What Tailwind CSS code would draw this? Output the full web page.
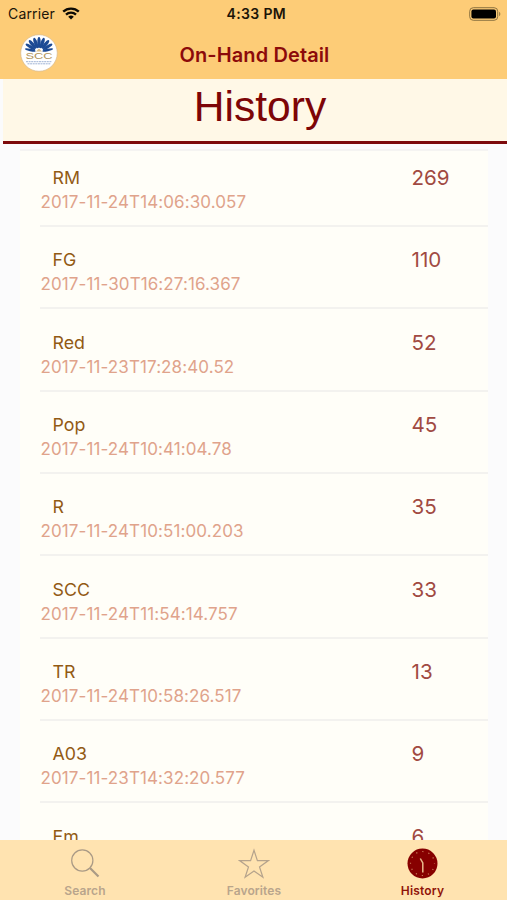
<!DOCTYPE html>
<html lang="en">

<head>
  <meta charset="UTF-8" />
  <meta name="viewport" content="width=device-width, initial-scale=1.0" />
  <script src="https://cdn.jsdelivr.net/npm/@tailwindcss/browser@4"></script>
  <title>On-Hand Detail</title>
</head>

<body class="bg-[#fbfbfc] font-['Inter',sans-serif]">
  <div class="flex h-[900px] w-[507px] flex-col overflow-hidden">
    <header class="h-[79px] shrink-0 bg-[#fdcc77]">
      <div class="grid h-[27px] grid-cols-[1fr_60px_1fr] items-center pr-1.5 pl-2 text-[14px] text-[#1c1508]">
        <div class="flex items-center gap-[7px]">
          <span class="tracking-[0.15px]">Carrier</span>
          <svg class="h-[13px] w-[18px]" viewBox="0 0 18 13" fill="none" stroke="#0d0a04" stroke-width="2.3">
            <path d="M1.2 4.7a11.2 11.2 0 0 1 15.6 0" />
            <path d="M4 7.7a7.2 7.2 0 0 1 10 0" />
            <path d="M9 12.5 6.2 9.8a4 4 0 0 1 5.6 0z" fill="#0d0a04" stroke="none" />
          </svg>
        </div>
        <span class="pl-0.5 text-center font-semibold tracking-[0.35px] whitespace-nowrap">4:33 PM</span>
        <svg class="h-[14px] w-[32px] justify-self-end" viewBox="0 0 32 14" fill="none">
          <rect x=".7" y=".7" width="28" height="12.6" rx="3.6" stroke="#8d7341" />
          <rect x="2.4" y="2.4" width="24.6" height="9.2" rx="2" fill="#000" />
          <path d="M30.2 4.8c1.5.7 1.5 3.7 0 4.4z" fill="#8d7341" />
        </svg>
      </div>
      <div class="grid h-[52px] grid-cols-[80px_1fr_80px] items-center">
        <svg class="mb-px ml-5 size-[38px]" viewBox="0 0 38 38">
          <circle cx="19" cy="19" r="18.3" fill="#fff" stroke="#d8b989" stroke-width=".7" />
          <g fill="#1c4a94">
            <ellipse cx="19" cy="8.5" rx="1.7" ry="5.5" />
            <ellipse cx="19" cy="8.5" rx="1.7" ry="5.5" transform="rotate(20 19 18)" />
            <ellipse cx="19" cy="8.5" rx="1.7" ry="5.5" transform="rotate(-20 19 18)" />
            <ellipse cx="19" cy="8" rx="1.7" ry="5.5" transform="rotate(40 19 18)" />
            <ellipse cx="19" cy="8" rx="1.7" ry="5.5" transform="rotate(-40 19 18)" />
            <ellipse cx="19" cy="8" rx="1.5" ry="5.5" transform="rotate(59 19 18)" />
            <ellipse cx="19" cy="8" rx="1.5" ry="5.5" transform="rotate(-59 19 18)" />
            <ellipse cx="19" cy="9" rx="1.2" ry="5.5" transform="rotate(77 19 18)" />
            <ellipse cx="19" cy="9" rx="1.2" ry="5.5" transform="rotate(-77 19 18)" />
          </g>
          <path d="m16 17.5 3-3 3 3z" fill="#d9bd85" />
          <text x="5.5" y="25.2" textLength="27" lengthAdjust="spacingAndGlyphs" font-family="Liberation Sans, sans-serif" font-size="9.5" fill="#b0935a">SCC</text>
          <path d="M6 27.7h26M7.5 29.8h23" stroke="#9fb3d4" stroke-width="1" stroke-dasharray="2 .6" />
        </svg>
        <h1 class="pt-[3px] pl-0.5 text-center text-[20px] font-semibold tracking-[0.1px] text-[#8c0a0a]">On-Hand Detail</h1>
      </div>
    </header>

    <div class="ml-[3px] flex h-[65px] shrink-0 justify-center border-b-[3px] border-[#7d0a0c] bg-[#fff8e7] pl-[10px]">
      <h2 class="font-['Liberation_Sans',sans-serif] text-[42.6px] leading-[54px] text-[#7d0507]">History</h2>
    </div>

    <main class="min-h-0 flex-1 overflow-hidden pt-[5px] pr-[19px] pl-5">
      <div id="list" class="border-t-2 border-[#f5f4f2] bg-[#fffef8] pl-5"></div>
    </main>

    <nav class="grid h-[60px] shrink-0 grid-cols-3 bg-[#ffe3b0] text-[12px] font-semibold text-[#b9a58c]">
      <div class="flex flex-col items-center pt-2">
        <svg class="h-8 w-8" viewBox="0 0 32 32" fill="none" stroke="#aa9a85">
          <circle cx="13.3" cy="12.5" r="10.6" stroke-width="1.2" />
          <path d="m21 20 8.500 8.500" stroke-width="2.2" />
        </svg>
        <span class="mt-[3px] pl-px leading-4 tracking-[0.1px]">Search</span>
      </div>
      <div class="flex flex-col items-center pt-2">
        <svg class="h-8 w-8" viewBox="0 0 32 32" fill="none" stroke="#b5a38c" stroke-width="1.2">
          <path d="m16 2.2 3.4 10.4h11L21.5 19l3.4 10.3-8.9-6.3-8.9 6.3L10.5 19l-8.900-6.400h11z" />
        </svg>
        <span class="mt-[3px] pl-px leading-4 tracking-[0.1px]">Favorites</span>
      </div>
      <div class="flex flex-col items-center pt-2 text-[#8f1308]">
        <svg class="h-8 w-8" viewBox="0 0 32 32" fill="none">
          <circle cx="15.5" cy="15.5" r="15" fill="#870000" />
          <circle cx="15.5" cy="15.5" r="12" stroke="#c97a58" stroke-width="1.2" stroke-dasharray="1.2 5.083" stroke-dashoffset=".6" />
          <path d="m13.3 10.5 2.500 4.500v9.500" stroke="#e8b98c" stroke-width="1.5" />
        </svg>
        <span class="mt-[3px] leading-4 tracking-[0.2px]">History</span>
      </div>
    </nav>
  </div>

  <script>
    const items = [
      ['RM', '2017-11-24T14:06:30.057', 269],
      ['FG', '2017-11-30T16:27:16.367', 110],
      ['Red', '2017-11-23T17:28:40.52', 52],
      ['Pop', '2017-11-24T10:41:04.78', 45],
      ['R', '2017-11-24T10:51:00.203', 35],
      ['SCC', '2017-11-24T11:54:14.757', 33],
      ['TR', '2017-11-24T10:58:26.517', 13],
      ['A03', '2017-11-23T14:32:20.577', 9],
      ['Em', '', 6],
    ];
    const list = document.getElementById('list');
    items.forEach(([name, time, qty], i) => {
      const row = document.createElement('div');
      row.className = 'flex border-b-2 border-[#f3f2ef] ' + (i === 0 ? 'h-[76px] pt-[15px]' : 'h-[82.35px] pt-[21.3px]');
      row.innerHTML = `
        <div class="w-[371.5px] pl-[0.5px]">
          <div class="pl-3 text-[17.8px] leading-[24px] text-[#925a14]">${name}</div>
          <div class="text-[17px] leading-6 tracking-[0.1px] text-[#e0a38b]">${time}</div>
        </div>
        <div class="text-[20.6px] leading-[23px] text-[#a14a42]">${qty}</div>`;
      list.appendChild(row);
    });
  </script>
</body>

</html>
